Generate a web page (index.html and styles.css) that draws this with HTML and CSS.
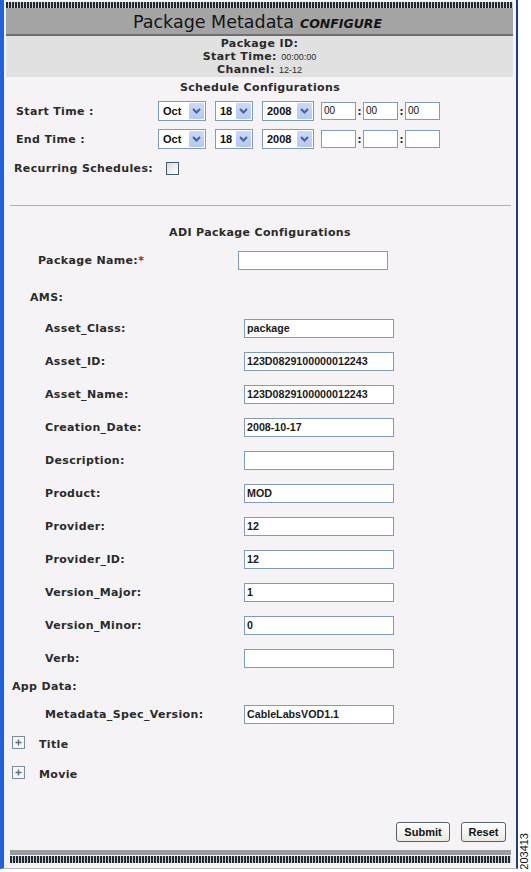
FILE: index.html
```html
<!DOCTYPE html>
<html>
<head>
<meta charset="utf-8">
<title>Package Metadata</title>
<link rel="stylesheet" href="styles.css">
</head>
<body>
<div class="page">
  <div class="window">
    <div class="top-stripe"></div>
    <div class="header"><span class="title">Package Metadata</span> <span class="configure">CONFIGURE</span></div>
    <div class="info">
      <div class="info-line">Package ID:</div>
      <div class="info-line">Start Time: <span class="info-val">00:00:00</span></div>
      <div class="info-line">Channel: <span class="info-val">12-12</span></div>
    </div>
    <div class="content">
      <div class="heading sched-heading">Schedule Configurations</div>
      <div class="sched-row">
        <span class="sched-label">Start Time :</span>
        <span class="sel sel-mon"><span class="sel-text">Oct</span><span class="sel-btn"><svg width="15" height="16" viewBox="0 0 15 16"><polyline points="4,6 7.5,9.5 11,6" fill="none" stroke="#4d6185" stroke-width="2"/></svg></span></span>
        <span class="sel sel-day"><span class="sel-text">18</span><span class="sel-btn"><svg width="15" height="16" viewBox="0 0 15 16"><polyline points="4,6 7.5,9.5 11,6" fill="none" stroke="#4d6185" stroke-width="2"/></svg></span></span>
        <span class="sel sel-year"><span class="sel-text">2008</span><span class="sel-btn"><svg width="15" height="16" viewBox="0 0 15 16"><polyline points="4,6 7.5,9.5 11,6" fill="none" stroke="#4d6185" stroke-width="2"/></svg></span></span>
        <span class="time-box first">00</span><span class="colon">:</span><span class="time-box">00</span><span class="colon">:</span><span class="time-box">00</span>
      </div>
      <div class="sched-row">
        <span class="sched-label">End Time :</span>
        <span class="sel sel-mon"><span class="sel-text">Oct</span><span class="sel-btn"><svg width="15" height="16" viewBox="0 0 15 16"><polyline points="4,6 7.5,9.5 11,6" fill="none" stroke="#4d6185" stroke-width="2"/></svg></span></span>
        <span class="sel sel-day"><span class="sel-text">18</span><span class="sel-btn"><svg width="15" height="16" viewBox="0 0 15 16"><polyline points="4,6 7.5,9.5 11,6" fill="none" stroke="#4d6185" stroke-width="2"/></svg></span></span>
        <span class="sel sel-year"><span class="sel-text">2008</span><span class="sel-btn"><svg width="15" height="16" viewBox="0 0 15 16"><polyline points="4,6 7.5,9.5 11,6" fill="none" stroke="#4d6185" stroke-width="2"/></svg></span></span>
        <span class="time-box first"></span><span class="colon">:</span><span class="time-box"></span><span class="colon">:</span><span class="time-box"></span>
      </div>
      <div class="recur-row">
        <span class="recur-label">Recurring Schedules:</span>
        <span class="checkbox"></span>
      </div>
      <div class="divider"></div>
      <div class="heading adi-heading">ADI Package Configurations</div>
      <div class="pkg-row">
        <span class="pkg-label">Package Name:<span class="req">*</span></span>
        <span class="field pkg-field"></span>
      </div>
      <div class="group-row ams-row">AMS:</div>
      <div class="attr-row"><span class="attr-label">Asset_Class:</span><span class="field">package</span></div>
      <div class="attr-row"><span class="attr-label">Asset_ID:</span><span class="field">123D0829100000012243</span></div>
      <div class="attr-row"><span class="attr-label">Asset_Name:</span><span class="field">123D0829100000012243</span></div>
      <div class="attr-row"><span class="attr-label">Creation_Date:</span><span class="field">2008-10-17</span></div>
      <div class="attr-row"><span class="attr-label">Description:</span><span class="field"></span></div>
      <div class="attr-row"><span class="attr-label">Product:</span><span class="field">MOD</span></div>
      <div class="attr-row"><span class="attr-label">Provider:</span><span class="field">12</span></div>
      <div class="attr-row"><span class="attr-label">Provider_ID:</span><span class="field">12</span></div>
      <div class="attr-row"><span class="attr-label">Version_Major:</span><span class="field">1</span></div>
      <div class="attr-row"><span class="attr-label">Version_Minor:</span><span class="field">0</span></div>
      <div class="attr-row"><span class="attr-label">Verb:</span><span class="field"></span></div>
      <div class="group-row app-row">App Data:</div>
      <div class="attr-row meta-row"><span class="attr-label">Metadata_Spec_Version:</span><span class="field">CableLabsVOD1.1</span></div>
      <div class="expand-row title-row">
        <span class="plus"><svg width="13" height="13" viewBox="0 0 13 13"><rect x="0.5" y="0.5" width="12" height="12" fill="#f4f6f8" stroke="#7c8c9c"/><path d="M3.5 6.5h6M6.5 3.5v6" stroke="#5f7184" stroke-width="1.4"/></svg></span>
        <span class="expand-label">Title</span>
      </div>
      <div class="expand-row movie-row">
        <span class="plus"><svg width="13" height="13" viewBox="0 0 13 13"><rect x="0.5" y="0.5" width="12" height="12" fill="#f4f6f8" stroke="#7c8c9c"/><path d="M3.5 6.5h6M6.5 3.5v6" stroke="#5f7184" stroke-width="1.4"/></svg></span>
        <span class="expand-label">Movie</span>
      </div>
      <div class="button-row">
        <button class="btn btn-submit">Submit</button>
        <button class="btn btn-reset">Reset</button>
      </div>
      <div class="bottom-gray"></div>
      <div class="bottom-stripe"></div>
    </div>
  </div>
  <div class="side">
    <span class="fig-no">203413</span>
  </div>
</div>
</body>
</html>
```

FILE: styles.css
```css
* { box-sizing: border-box; }

html, body {
  margin: 0;
  padding: 0;
  background: #ffffff;
}

body {
  width: 531px;
  height: 872px;
  overflow: hidden;
  font-family: "DejaVu Sans", Verdana, sans-serif;
  color: #2b2b2b;
}

.page {
  display: flex;
  height: 872px;
}

.window {
  width: 518px;
  height: 869px;
  border-left: 4px solid #2161e0;
  border-right: 2px solid #1d3f82;
  background: #f5f3f6;
  display: flex;
  flex-direction: column;
  border-bottom: 1px solid #b8b8b8;
}

.top-stripe {
  margin: 2px 3px 0 2px;
  height: 6px;
  background: repeating-linear-gradient(90deg, #23272e 0 2px, #c9d2dc 2px 3px);
}

.header {
  margin: 0 3px 0 2px;
  height: 28px;
  background: #a4a4a4;
  border-bottom: 2px solid #6f6f6f;
  display: flex;
  align-items: center;
  justify-content: center;
  gap: 6px;
  padding-top: 2px;
  padding-right: 4px;
  color: #141414;
}

.title {
  font-size: 17.5px;
  font-family: "DejaVu Sans", Verdana, sans-serif;
}

.configure {
  font-size: 12.5px;
  font-weight: bold;
  font-style: italic;
  padding-top: 3px;
}

.info {
  margin: 0 3px 0 2px;
  height: 41px;
  background: #e1e1e1;
  padding-top: 1px;
  text-align: center;
}

.info-line {
  height: 13px;
  line-height: 13px;
  font-size: 11px;
  letter-spacing: 0.4px;
  font-weight: bold;
  color: #2a2a2a;
}

.info-val {
  font-family: "Liberation Sans", Arial, sans-serif;
  font-weight: normal;
  font-size: 9px;
  letter-spacing: 0;
}

.content {
  flex: 1;
  display: flex;
  flex-direction: column;
}

.heading {
  text-align: center;
  font-size: 11px;
  letter-spacing: 0.35px;
  font-weight: bold;
  height: 14px;
  line-height: 14px;
}

.sched-heading {
  margin-top: 4px;
  margin-bottom: 2px;
}

.sched-row {
  display: flex;
  align-items: center;
  height: 28px;
  padding-left: 12px;
  font-size: 11px;
  letter-spacing: 0.35px;
  font-weight: bold;
}

.sched-label {
  width: 142px;
}

.sel {
  position: relative;
  display: flex;
  align-items: center;
  height: 20px;
  border: 1px solid #7f9db9;
  background: #ffffff;
  font-family: "Liberation Sans", Arial, sans-serif;
  font-weight: bold;
  font-size: 11px;
  letter-spacing: 0;
  color: #111;
  padding-left: 4px;
}

.sel-mon { width: 48px; }
.sel-day { width: 38px; margin-left: 9px; }
.sel-year { width: 52px; margin-left: 9px; }

.sel-text { flex: 1; }

.sel-btn {
  width: 15px;
  height: 16px;
  margin-right: 1px;
  background: linear-gradient(#cad9fc, #b4c8f6);
  border-radius: 1px;
  display: flex;
}

.time-box {
  width: 35px;
  height: 18px;
  border: 1px solid #7f9db9;
  background: #ffffff;
  font-family: "Liberation Sans", Arial, sans-serif;
  font-weight: normal;
  font-size: 10px;
  letter-spacing: 0;
  line-height: 16px;
  padding-left: 2px;
  color: #111;
}

.time-box.first { margin-left: 7px; }

.colon {
  width: 7px;
  text-align: center;
  font-size: 10px;
  letter-spacing: 0;
  font-weight: bold;
}

.recur-row {
  display: flex;
  align-items: center;
  height: 30px;
  padding-left: 10px;
  font-size: 11px;
  letter-spacing: 0.35px;
  font-weight: bold;
}

.recur-label { width: 152px; }

.checkbox {
  width: 13px;
  height: 13px;
  border: 1px solid #3e5a77;
  background: linear-gradient(135deg, #dcdcd6, #ffffff);
}

.divider {
  margin: 22px 5px 0 6px;
  height: 1px;
  background: #b3acac;
}

.adi-heading {
  margin-top: 20px;
}

.pkg-row {
  margin-top: 4px;
  height: 32px;
  display: flex;
  align-items: center;
  padding-left: 34px;
  font-size: 11px;
  letter-spacing: 0.35px;
  font-weight: bold;
}

.pkg-label { width: 200px; }

.req { color: #b01818; }

.field {
  width: 150px;
  height: 19px;
  border: 1px solid #7f9db9;
  background: #ffffff;
  font-family: "Liberation Sans", Arial, sans-serif;
  font-weight: bold;
  font-size: 10.7px;
  letter-spacing: 0;
  line-height: 17px;
  padding-left: 2px;
  color: #1a1a1a;
}

.group-row {
  display: flex;
  align-items: center;
  font-size: 11px;
  letter-spacing: 0.35px;
  font-weight: bold;
}

.ams-row {
  margin-top: 6px;
  height: 30px;
  padding-left: 26px;
}

.app-row {
  height: 22px;
  padding-left: 8px;
}

.attr-row {
  display: flex;
  align-items: center;
  height: 33px;
  padding-left: 41px;
  font-size: 11px;
  letter-spacing: 0.35px;
  font-weight: bold;
}

.meta-row { height: 34px; }

.attr-label { width: 199px; }

.expand-row {
  display: flex;
  align-items: center;
  padding-left: 8px;
  font-size: 11px;
  letter-spacing: 0.35px;
  font-weight: bold;
}

.title-row { height: 26px; }
.movie-row { height: 34px; }

.plus {
  width: 13px;
  height: 13px;
  display: flex;
  margin-top: -3px;
}

.expand-label { margin-left: 14px; }

.button-row {
  margin-top: 31px;
  display: flex;
  justify-content: flex-end;
  gap: 11px;
  padding-right: 10px;
}

.btn {
  height: 20px;
  padding: 0;
  border: 1px solid #58606a;
  border-radius: 3px;
  background: linear-gradient(#ffffff, #ebe9e3);
  font-family: "Liberation Sans", Arial, sans-serif;
  font-weight: bold;
  font-size: 11px;
  color: #111;
}

.btn-submit { width: 54px; }
.btn-reset { width: 45px; }

.bottom-gray {
  margin: 8px 5px 0 6px;
  height: 5px;
  background: #9b9b9b;
}

.bottom-stripe {
  margin: 1px 5px 0 6px;
  height: 7px;
  background: repeating-linear-gradient(90deg, #23272e 0 2px, #c9d2dc 2px 3px);
}

.side {
  width: 13px;
  display: flex;
  flex-direction: column;
  justify-content: flex-end;
  align-items: center;
  padding-bottom: 2px;
}

.fig-no {
  writing-mode: vertical-rl;
  transform: rotate(180deg);
  font-family: "Liberation Sans", Arial, sans-serif;
  font-size: 11px;
  color: #111;
  line-height: 11px;
}
```
